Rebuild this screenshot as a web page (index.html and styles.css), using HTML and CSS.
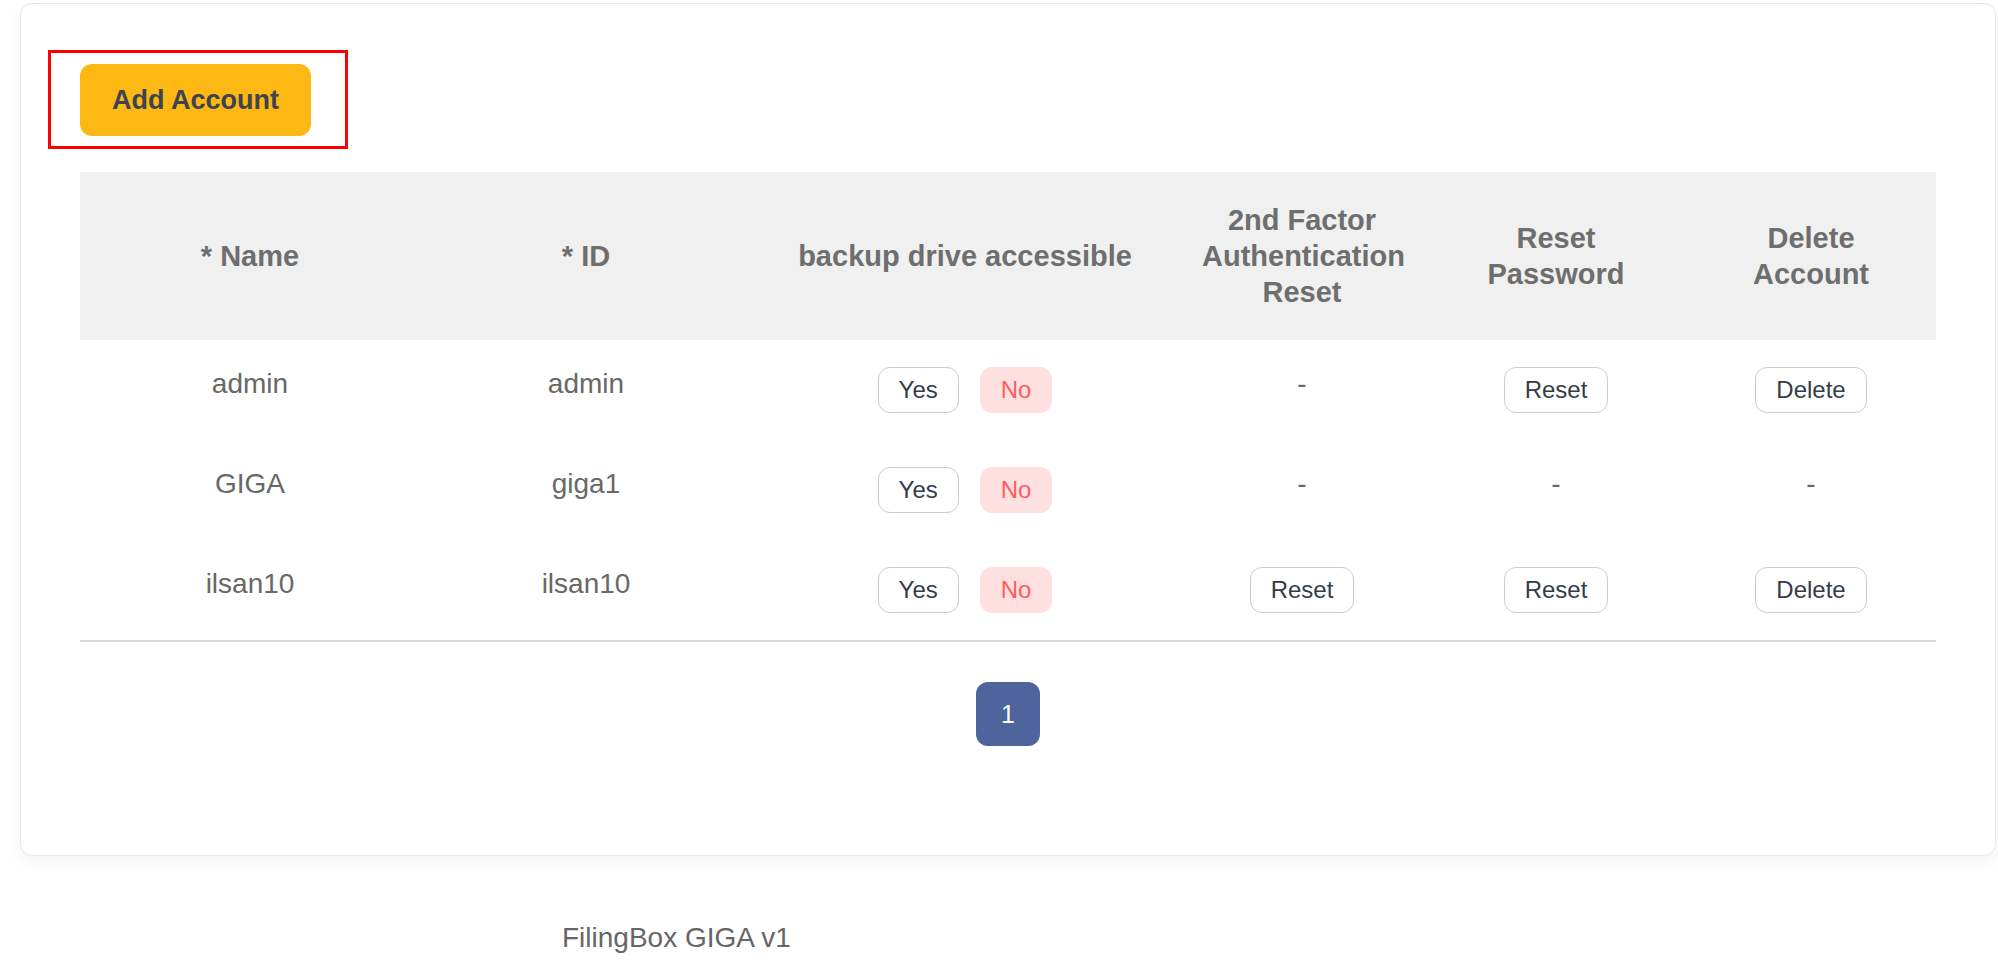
FILE: index.html
```html
<!DOCTYPE html>
<html lang="en">
<head>
<meta charset="utf-8">
<title>Accounts - FilingBox GIGA</title>
<link rel="stylesheet" href="styles.css">
</head>
<body>
<div class="page">
  <section class="card">
    <div class="highlight"></div>
    <div class="toolbar">
      <button class="btn-primary">Add Account</button>
    </div>
    <div class="table-wrap">
      <table class="accounts">
        <colgroup>
          <col class="c-name">
          <col class="c-id">
          <col class="c-backup">
          <col class="c-2fa">
          <col class="c-reset">
          <col class="c-delete">
        </colgroup>
        <thead>
          <tr>
            <th>* Name</th>
            <th>* ID</th>
            <th>backup drive accessible</th>
            <th>2nd Factor Authentication Reset</th>
            <th>Reset Password</th>
            <th>Delete Account</th>
          </tr>
        </thead>
        <tbody>
          <tr>
            <td class="txt">admin</td>
            <td class="txt">admin</td>
            <td><div class="pair"><button class="btn-sm">Yes</button><button class="btn-no">No</button></div></td>
            <td class="txt">-</td>
            <td><button class="btn-sm">Reset</button></td>
            <td><button class="btn-sm">Delete</button></td>
          </tr>
          <tr>
            <td class="txt">GIGA</td>
            <td class="txt">giga1</td>
            <td><div class="pair"><button class="btn-sm">Yes</button><button class="btn-no">No</button></div></td>
            <td class="txt">-</td>
            <td class="txt">-</td>
            <td class="txt">-</td>
          </tr>
          <tr>
            <td class="txt">ilsan10</td>
            <td class="txt">ilsan10</td>
            <td><div class="pair"><button class="btn-sm">Yes</button><button class="btn-no">No</button></div></td>
            <td><button class="btn-sm">Reset</button></td>
            <td><button class="btn-sm">Reset</button></td>
            <td><button class="btn-sm">Delete</button></td>
          </tr>
        </tbody>
      </table>
    </div>
    <nav class="pagination">
      <button class="page-btn">1</button>
    </nav>
  </section>
  <footer class="footer">FilingBox GIGA v1</footer>
</div>
</body>
</html>
```

FILE: styles.css
```css
* {
  box-sizing: border-box;
}

html, body {
  margin: 0;
  padding: 0;
  background: #ffffff;
}

body {
  font-family: "Liberation Sans", Arial, sans-serif;
  color: #666666;
  overflow: hidden;
}

.page {
  width: 1998px;
  height: 960px;
  padding: 3px 2px 0 20px;
}

.card {
  position: relative;
  width: 1976px;
  border: 1px solid #e7e7e7;
  border-radius: 12px;
  background: #ffffff;
  box-shadow: 0 6px 16px rgba(0, 0, 0, 0.05);
  padding: 60px 59px 109px 59px;
}

.highlight {
  position: absolute;
  left: 27px;
  top: 46px;
  width: 300px;
  height: 99px;
  border: 3px solid #ff0000;
  pointer-events: none;
}

.toolbar {
  display: flex;
  height: 72px;
}

.btn-primary {
  height: 72px;
  padding: 0 32px;
  border: none;
  border-radius: 12px;
  background: #fdb813;
  color: #3d4350;
  font-family: "Liberation Sans", Arial, sans-serif;
  font-weight: 700;
  font-size: 27px;
}

.table-wrap {
  margin-top: 36px;
  border-bottom: 2px solid #dadada;
}

.accounts {
  width: 1856px;
  table-layout: fixed;
  border-collapse: separate;
  border-spacing: 0;
}

.c-name { width: 340px; }
.c-id { width: 332px; }
.c-backup { width: 426px; }
.c-2fa { width: 248px; }
.c-reset { width: 260px; }
.c-delete { width: 250px; }

.accounts thead th {
  height: 168px;
  padding: 0 24px;
  background: #f0f0f0;
  color: #6e6e6e;
  font-size: 29px;
  font-weight: 700;
  line-height: 36px;
  text-align: center;
  vertical-align: middle;
}

.accounts tbody td {
  height: 100px;
  padding: 0 12px;
  text-align: center;
  vertical-align: middle;
  font-size: 28px;
  color: #686868;
}

.accounts tbody td.txt {
  padding-bottom: 12px;
}

.pair {
  display: flex;
  justify-content: center;
  gap: 21px;
}

.btn-sm {
  height: 46px;
  padding: 0 20px;
  border: 1.5px solid #c6cdd8;
  border-radius: 12px;
  background: #ffffff;
  color: #343c4a;
  font-family: "Liberation Sans", Arial, sans-serif;
  font-size: 24px;
  line-height: 1;
}

.btn-no {
  height: 46px;
  padding: 0 21px;
  border: none;
  border-radius: 12px;
  background: #ffe0e1;
  color: #ff5b5f;
  font-family: "Liberation Sans", Arial, sans-serif;
  font-size: 24px;
  line-height: 1;
}

.pagination {
  display: flex;
  justify-content: center;
  margin-top: 40px;
}

.page-btn {
  width: 64px;
  height: 64px;
  border: none;
  border-radius: 12px;
  background: #4f639d;
  color: #ffffff;
  font-family: "Liberation Sans", Arial, sans-serif;
  font-size: 25px;
}

.footer {
  margin-top: 66px;
  padding-left: 542px;
  font-size: 28px;
  line-height: 32px;
  color: #666666;
}
```
